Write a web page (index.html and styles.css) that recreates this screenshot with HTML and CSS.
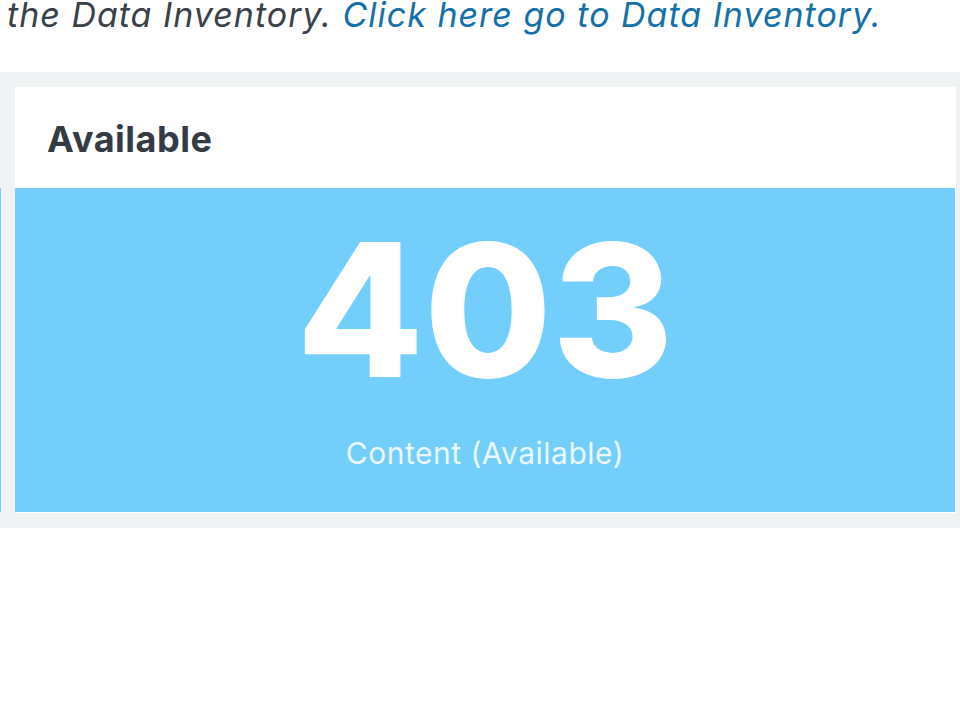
FILE: index.html
```html
<!DOCTYPE html>
<html lang="en">
<head>
<meta charset="utf-8">
<title>Available</title>
<link rel="stylesheet" href="styles.css">
</head>
<body>
<p class="intro">the Data Inventory. <a class="link" href="#">Click here go to Data Inventory.</a></p>
<section class="panel">
  <div class="prev-card"></div>
  <div class="card">
    <div class="card-head"><h2 class="card-title">Available</h2></div>
    <div class="card-body">
      <div class="big-num">403</div>
      <div class="caption">Content (Available)</div>
    </div>
  </div>
</section>
</body>
</html>
```
FILE: styles.css
```css
html, body {
  margin: 0;
  padding: 0;
  background: #ffffff;
  overflow: hidden;
  width: 960px;
  height: 716px;
}
body {
  font-family: "Inter", "Lato", sans-serif;
}
.intro {
  margin: -5px 0 37px 7px;
  height: 40px;
  font-size: 34px;
  line-height: 40px;
  letter-spacing: 1px;
  font-style: italic;
  color: #3a4149;
  white-space: nowrap;
}
.link {
  color: #1570a8;
  text-decoration: none;
}
.panel {
  background: #f0f3f4;
  display: flex;
  padding: 15px 4px 15px 0;
  height: 426px;
}
.prev-card {
  width: 1px;
  margin-top: 101px;
  height: 324px;
  background: #73cefb;
  margin-right: 14px;
}
.card {
  width: 941px;
  background: #ffffff;
  display: flex;
  flex-direction: column;
}
.card-head {
  height: 101px;
  box-sizing: border-box;
  padding: 30px 0 0 32px;
}
.card-title {
  margin: 0;
  font-size: 36px;
  line-height: 44px;
  letter-spacing: 0.5px;
  font-weight: 700;
  color: #343b45;
}
.card-body {
  height: 324px;
  margin-right: 1px;
  background: #73cefb;
  display: flex;
  flex-direction: column;
  align-items: center;
}
.big-num {
  margin-top: 30px;
  font-size: 185px;
  line-height: 185px;
  font-weight: 800;
  color: #ffffff;
}
.caption {
  margin-top: 32px;
  font-size: 30px;
  line-height: 36px;
  letter-spacing: 0.5px;
  color: #eaf7ff;
}
```
